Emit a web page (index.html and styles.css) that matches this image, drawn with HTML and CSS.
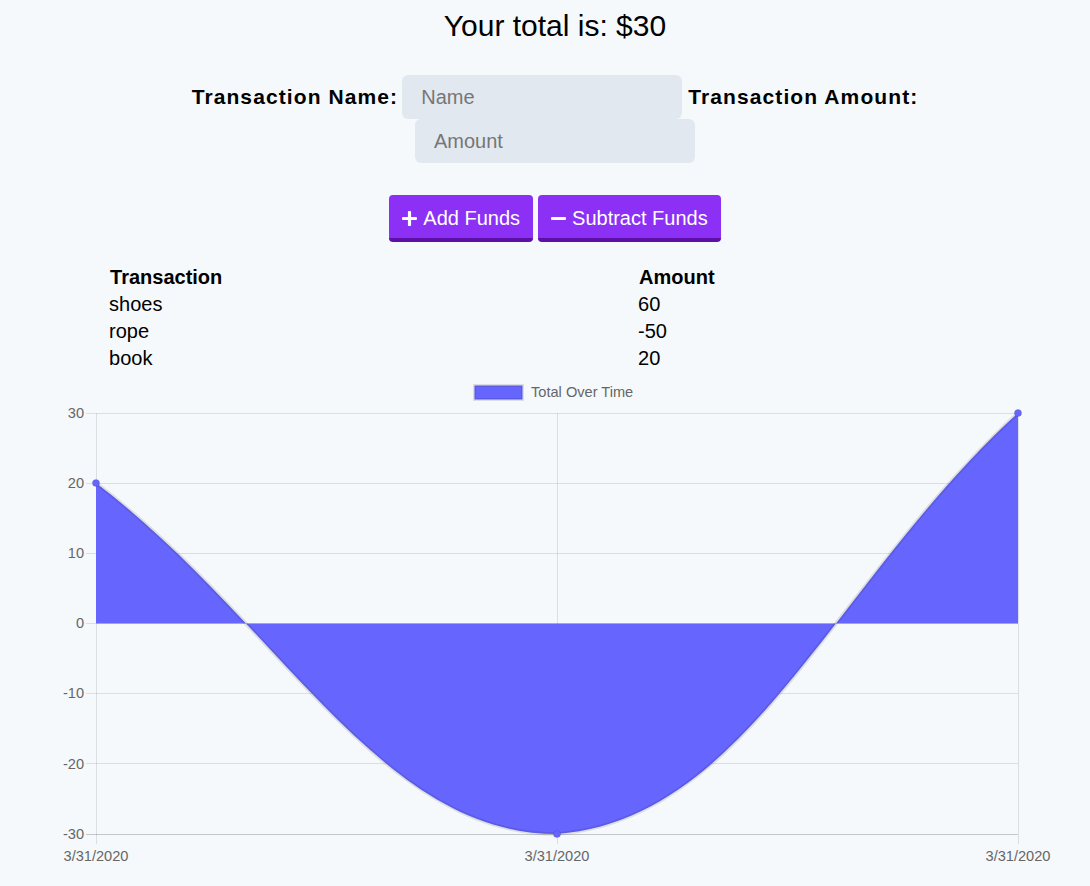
FILE: index.html
```html
<!DOCTYPE html>
<html lang="en">
<head>
<meta charset="utf-8">
<title>Budget Tracker</title>
<link rel="stylesheet" href="styles.css">
</head>
<body>
<div class="page">
  <h1 class="total">Your total is: $<span>30</span></h1>
  <form class="form">
    <label class="label label-name" for="t-name">Transaction Name:</label>
    <input class="field field-name" id="t-name" type="text" placeholder="Name">
    <label class="label" for="t-amount">Transaction Amount:</label>
    <input class="field" id="t-amount" type="number" placeholder="Amount">
  </form>
  <div class="buttons">
    <button class="btn" type="button">
      <svg class="icon" viewBox="0 0 448 512" aria-hidden="true"><path fill="currentColor" d="M416 208H272V64c0-17.670-14.330-32-32-32h-32c-17.670 0-32 14.330-32 32v144H32c-17.670 0-32 14.330-32 32v32c0 17.670 14.330 32 32 32h144v144c0 17.670 14.330 32 32 32h32c17.670 0 32-14.330 32-32V304h144c17.670 0 32-14.330 32-32v-32c0-17.670-14.330-32-32-32z"/></svg>
      <span>Add Funds</span>
    </button>
    <button class="btn" type="button">
      <svg class="icon" viewBox="0 0 448 512" aria-hidden="true"><path fill="currentColor" d="M416 208H32c-17.670 0-32 14.330-32 32v32c0 17.670 14.330 32 32 32h384c17.670 0 32-14.330 32-32v-32c0-17.670-14.330-32-32-32z"/></svg>
      <span>Subtract Funds</span>
    </button>
  </div>
  <table class="table">
    <thead>
      <tr><th class="col-name">Transaction</th><th>Amount</th></tr>
    </thead>
    <tbody>
      <tr><td>shoes</td><td>60</td></tr>
      <tr><td>rope</td><td>-50</td></tr>
      <tr><td>book</td><td>20</td></tr>
    </tbody>
  </table>
</div>
<svg class="chart" viewBox="8 373 1074 500" width="1074" height="500">
  <g class="grid">
    <line x1="86" y1="413.5" x2="1018" y2="413.5"/>
    <line x1="86" y1="483.5" x2="1018" y2="483.5"/>
    <line x1="86" y1="553.5" x2="1018" y2="553.5"/>
    <line x1="86" y1="623.5" x2="1018" y2="623.5"/>
    <line x1="86" y1="693.5" x2="1018" y2="693.5"/>
    <line x1="86" y1="763.5" x2="1018" y2="763.5"/>
    <line x1="96.5" y1="413" x2="96.5" y2="844"/>
    <line x1="557.5" y1="413" x2="557.5" y2="844"/>
    <line x1="1018.5" y1="413" x2="1018.5" y2="844"/>
    <line class="axis" x1="86" y1="834.5" x2="1018" y2="834.5"/>
  </g>
  <g class="ticks">
    <text x="84" y="413" text-anchor="end" dominant-baseline="central">30</text>
    <text x="84" y="483" text-anchor="end" dominant-baseline="central">20</text>
    <text x="84" y="553" text-anchor="end" dominant-baseline="central">10</text>
    <text x="84" y="623" text-anchor="end" dominant-baseline="central">0</text>
    <text x="84" y="693" text-anchor="end" dominant-baseline="central">-10</text>
    <text x="84" y="764" text-anchor="end" dominant-baseline="central">-20</text>
    <text x="84" y="834" text-anchor="end" dominant-baseline="central">-30</text>
    <text x="96" y="856" text-anchor="middle" dominant-baseline="central">3/31/2020</text>
    <text x="557" y="856" text-anchor="middle" dominant-baseline="central">3/31/2020</text>
    <text x="1018" y="856" text-anchor="middle" dominant-baseline="central">3/31/2020</text>
  </g>
  <g class="legend">
    <rect x="474.5" y="385.5" width="48" height="14"/>
    <text x="531" y="392" dominant-baseline="central">Total Over Time</text>
  </g>
  <path class="area" d="M96,483 C280.4,623.4 379.5,834 557,834 C748.3,819.5 833.6,581.4 1018,413 L1018,623.5 L96,623.5 Z"/>
  <path class="line" d="M96,483 C280.4,623.4 379.5,834 557,834 C748.3,819.5 833.6,581.4 1018,413"/>
  <g class="points">
    <circle cx="96" cy="483" r="3.6"/>
    <circle cx="557" cy="834" r="3.6"/>
    <circle cx="1018" cy="413" r="3.6"/>
  </g>
</svg>
</body>
</html>
```
FILE: styles.css
```css
html, body {
  background: #f5f9fc;
}
body {
  margin: 8px;
  font-family: "Liberation Sans", Arial, sans-serif;
  color: #000;
  overflow: hidden;
}
.page {
  padding-left: 20px;
}
.total {
  margin: 0;
  font-size: 30px;
  line-height: 36px;
  font-weight: normal;
  text-align: center;
}
.form {
  display: flex;
  flex-wrap: wrap;
  justify-content: center;
  align-items: center;
  max-width: 760px;
  margin: 31px auto 0;
}
.label {
  font-size: 21px;
  font-weight: bold;
  letter-spacing: 1.1px;
}
.label-name {
  margin-right: 4px;
}
.field {
  box-sizing: border-box;
  width: 280px;
  height: 44px;
  border: none;
  border-radius: 6px;
  background: #e2e8f0;
  padding: 0 19px;
  font-family: "Liberation Sans", Arial, sans-serif;
  font-size: 20px;
  color: #333;
  outline: none;
}
.field::placeholder {
  color: #767676;
}
.field-name {
  margin-right: 6px;
}
.buttons {
  display: flex;
  justify-content: center;
  gap: 5px;
  margin-top: 32px;
}
.btn {
  display: flex;
  align-items: center;
  gap: 6px;
  height: 47px;
  box-sizing: border-box;
  padding: 3px 13px 0 13px;
  border: none;
  border-bottom: 4px solid #5c10a6;
  border-radius: 4px;
  background: #8c30f5;
  color: #fff;
  font-family: "Liberation Sans", Arial, sans-serif;
  font-size: 20px;
}
.icon {
  width: 15px;
  height: 17px;
  display: block;
}
.table {
  width: 85%;
  margin: 21px auto 0;
  font-size: 20px;
}
.table th {
  text-align: left;
  font-weight: bold;
}
.table td {
  padding: 1px 1px 1px 0;
}
.table .col-name {
  width: 525px;
}
.chart {
  display: block;
  font-family: "Liberation Sans", Arial, sans-serif;
}
.grid line {
  stroke: rgba(0, 0, 0, 0.1);
  stroke-width: 1;
}
.grid .axis {
  stroke: rgba(0, 0, 0, 0.2);
}
.ticks text, .legend text {
  font-size: 14.6px;
  fill: #666;
}
.legend rect {
  fill: #6666ff;
  stroke: rgba(0, 0, 0, 0.1);
  stroke-width: 3;
}
.area {
  fill: #6666ff;
}
.line {
  fill: none;
  stroke: rgba(0, 0, 0, 0.1);
  stroke-width: 3.6;
}
.points circle {
  fill: #6666ff;
  stroke: rgba(0, 0, 0, 0.1);
  stroke-width: 1;
}
```
